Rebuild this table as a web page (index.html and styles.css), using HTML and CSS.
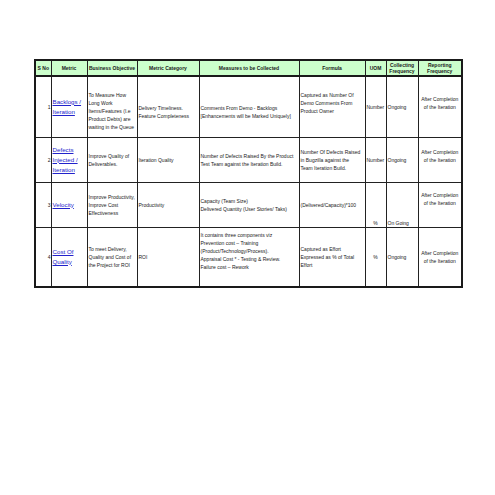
FILE: index.html
```html
<!DOCTYPE html>
<html>
<head>
<meta charset="utf-8">
<link rel="stylesheet" href="styles.css">
</head>
<body>
<div class="page">
<table class="sheet">
<colgroup>
<col class="c1"><col class="c2"><col class="c3"><col class="c4"><col class="c5"><col class="c6"><col class="c7"><col class="c8"><col class="c9">
</colgroup>
<thead>
<tr class="head">
<th>S No</th><th>Metric</th><th>Business Objective</th><th>Metric Category</th><th>Measures to be Collected</th><th>Formula</th><th>UOM</th><th>Collecting Frequency</th><th>Reporting Frequency</th>
</tr>
</thead>
<tbody>
<tr class="r1">
<td class="num">1</td>
<td class="metric"><a href="#">Backlogs / Iteration</a></td>
<td class="pb">To Measure How Long Work Items/Features (I.e Product Debts) are waiting in the Queue</td>
<td class="low">Delivery Timeliness. Feature Completeness</td>
<td class="low">Comments From Demo - Backlogs [Enhancements will be Marked Uniquely]</td>
<td class="high">Captured as Number Of Demo Comments From Product Owner</td>
<td>Number</td>
<td>Ongoing</td>
<td class="ctr high">After Completion of the Iteration</td>
</tr>
<tr class="r2">
<td class="num">2</td>
<td class="metric"><a href="#">Defects Injected / Iteration</a></td>
<td>Improve Quality of Deliverables.</td>
<td>Iteration Quality</td>
<td>Number of Defects Raised By the Product Test Team against the Iteration Build.</td>
<td>Number Of Defects Raised<br>in Bugzilla against the<br>Team Iteration Build.</td>
<td>Number</td>
<td>Ongoing</td>
<td class="ctr high">After Completion of the Iteration</td>
</tr>
<tr class="r3">
<td class="num">3</td>
<td class="metric"><a href="#">Velocity</a></td>
<td>Improve Productivity, Improve Cost Effectiveness</td>
<td>Productivity</td>
<td>Capacity (Team Size)<br>Delivered Quantity (User Stories/ Taks)</td>
<td>(Delivered/Capacity)*100</td>
<td class="ctr bot">%</td>
<td class="bot">On Going</td>
<td class="ctr top">After Completion of the Iteration</td>
</tr>
<tr class="r4">
<td class="num">4</td>
<td class="metric"><a href="#">Cost Of Quality</a></td>
<td>To meet Delivery, Quality and Cost of the Project for ROI</td>
<td>ROI</td>
<td class="top4">It contains three components viz<br>Prevention cost – Training<br>(Product/Technology/Process).<br>Appraisal Cost * - Testing &amp; Review.<br>Failure cost – Rework</td>
<td>Captured as Effort Expressed as % of Total Effort</td>
<td class="ctr">%</td>
<td>Ongoing</td>
<td class="ctr">After Completion of the Iteration</td>
</tr>
</tbody>
</table>
</div>
</body>
</html>
```

FILE: styles.css
```css
html, body {
  margin: 0;
  padding: 0;
  background: #ffffff;
}
.page {
  padding: 59px 0 0 34px;
}
.sheet {
  border-collapse: collapse;
  table-layout: fixed;
  width: 427px;
  border: 2px solid #1a1a1a;
  font-family: "Liberation Sans", Arial, sans-serif;
  font-size: 5px;
  line-height: 8px;
  color: #1a1a1a;
}
.c1 { width: 16px; }
.c2 { width: 36px; }
.c3 { width: 50px; }
.c4 { width: 62px; }
.c5 { width: 100px; }
.c6 { width: 66px; }
.c7 { width: 21px; }
.c8 { width: 32px; }
.c9 { width: 44px; }
.sheet th, .sheet td {
  border: 1px solid #222222;
  padding: 0 1px;
  vertical-align: middle;
  text-align: left;
  overflow: hidden;
}
.head th {
  background: #ccffcc;
  font-weight: bold;
  text-align: center;
  line-height: 6.5px;
  border-bottom: 2px solid #1a1a1a;
}
.head { height: 16px; }
.r1 { height: 61px; }
.r2 { height: 45px; }
.r3 { height: 45px; }
.r4 { height: 60px; }
.sheet td.num { text-align: right; padding-right: 0; }
.metric a {
  color: #2222cc;
  text-decoration: underline;
  font-size: 6.2px;
  line-height: 10px;
}
.sheet td.ctr { text-align: center; }
.sheet td.top { vertical-align: top; padding-top: 8px; }
.sheet td.top4 { vertical-align: top; padding-top: 3px; }
.sheet td.bot { vertical-align: bottom; }
.sheet td.low { padding-top: 10px; }
.sheet td.high { padding-bottom: 8px; }
.sheet td.pb { padding-top: 8px; }
```
